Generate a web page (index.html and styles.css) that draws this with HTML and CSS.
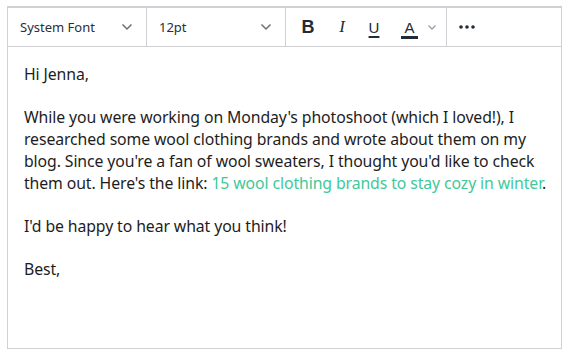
FILE: index.html
```html
<!DOCTYPE html>
<html>
<head>
<meta charset="utf-8">
<link rel="stylesheet" href="styles.css">
</head>
<body>
<div class="editor">
  <div class="toolbar">
    <div class="group select font">
      <span>System Font</span>
      <svg class="chev" width="12" height="8" viewBox="0 0 12 8"><path d="M1.5 1.5 L6 6 L10.5 1.5" fill="none" stroke="#6b6f78" stroke-width="1.5"/></svg>
    </div>
    <div class="group select size">
      <span>12pt</span>
      <svg class="chev" width="12" height="8" viewBox="0 0 12 8"><path d="M1.5 1.5 L6 6 L10.5 1.5" fill="none" stroke="#6b6f78" stroke-width="1.5"/></svg>
    </div>
    <div class="group format">
      <span class="btn bold">B</span>
      <span class="btn italic">I</span>
      <span class="btn under">U</span>
      <span class="btn color">A<i class="bar"></i></span>
      <svg class="chev small" width="10" height="7" viewBox="0 0 10 7"><path d="M1.5 1.5 L5 5 L8.5 1.5" fill="none" stroke="#9a9da5" stroke-width="1.3"/></svg>
    </div>
    <div class="group more">
      <svg width="16" height="4" viewBox="0 0 16 4"><circle cx="2" cy="2" r="1.8" fill="#222b38"/><circle cx="8" cy="2" r="1.8" fill="#222b38"/><circle cx="14" cy="2" r="1.8" fill="#222b38"/></svg>
    </div>
    <div class="fill"></div>
  </div>
  <div class="content">
    <p>Hi Jenna,</p>
    <p>While you were working on Monday's photoshoot (which I loved!), I researched some wool clothing brands and wrote about them on my blog. Since you're a fan of wool sweaters, I thought you'd like to check them out. Here's the link: <a class="link">15 wool clothing brands to stay cozy in winter</a>.</p>
    <p>I'd be happy to hear what you think!</p>
    <p>Best,</p>
  </div>
</div>
</body>
</html>
```
FILE: styles.css
```css
html, body { margin: 0; padding: 0; background: #fff; }
body { padding: 6px 8px 7px 7px; font-family: "Noto Sans", sans-serif; color: #1d1d1d; }
.editor {
  width: 553px;
  height: 340px;
  border: 1px solid #cfcfd4;
  border-top-width: 2px;
  display: flex;
  flex-direction: column;
}
.toolbar {
  height: 38px;
  display: flex;
  border-bottom: 1px solid #cfcfd4;
  flex: none;
}
.group {
  display: flex;
  align-items: center;
  border-right: 1px solid #cfcfd4;
  box-sizing: border-box;
}
.select { justify-content: space-between; font-size: 13px; color: #2b2e35; }
.font { width: 139px; padding: 0 13px 0 12px; }
.size { width: 139px; padding: 0 13px 0 12px; }
.format { width: 161px; padding: 0 0 0 15px; }
.more { width: 50px; padding-left: 12px; border-right: none; }
.btn { font-size: 17px; color: #222b38; display: inline-flex; justify-content: center; position: relative; }
.bold { font-weight: 700; font-family: "Liberation Sans", sans-serif; font-size: 18px; width: 14px; }
.italic { font-family: "Liberation Serif", serif; font-style: italic; width: 14px; margin-left: 20px; }
.under { text-decoration: underline; text-underline-offset: 3px; text-decoration-thickness: 1.5px; font-family: "Liberation Sans", sans-serif; font-size: 15px; width: 14px; margin-left: 18px; }
.color { font-family: "Liberation Sans", sans-serif; font-size: 15px; width: 17px; margin-left: 20px; }
.color .bar { position: absolute; left: 0; right: 0; bottom: -3px; height: 3px; background: #222b38; }
.chev.small { margin-left: 9px; }
.content { padding: 17px 3px 8px 16px; font-size: 15.8px; line-height: 21.7px; letter-spacing: -0.1px; }
.content p { margin: 0 0 21.7px; }
.link { color: #3fc898; }
```
